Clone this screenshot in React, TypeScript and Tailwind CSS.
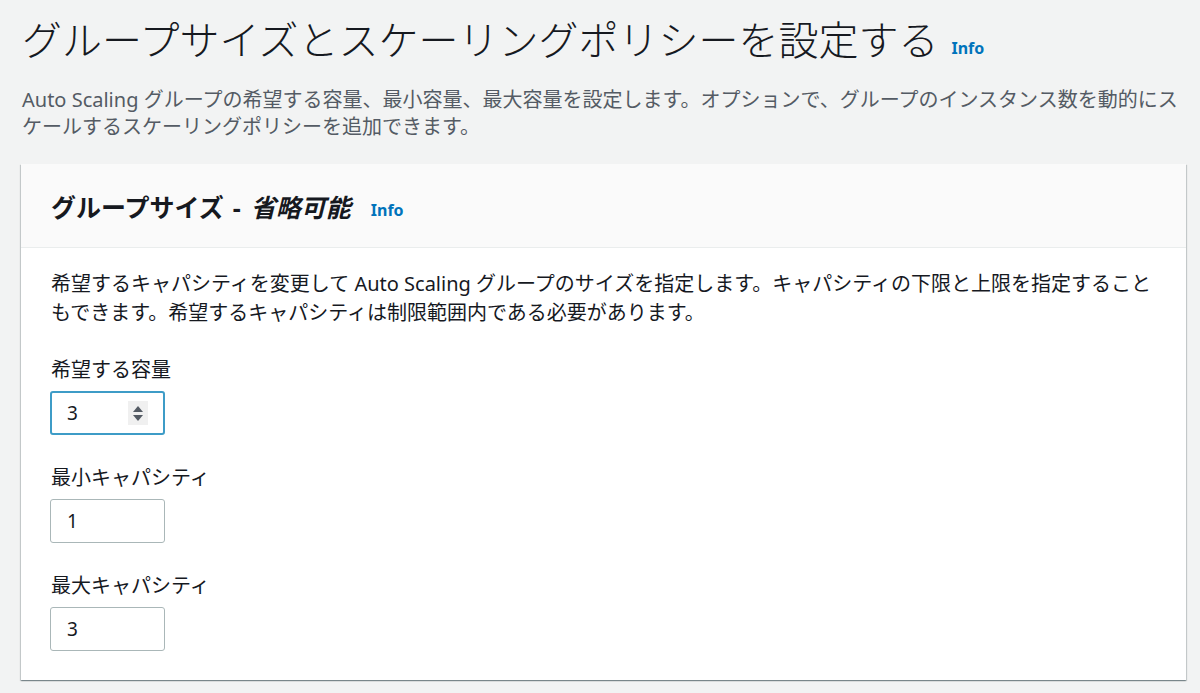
import React from "react";

const FONT = { fontFamily: '"Noto Sans", "Noto Sans CJK JP", sans-serif' };

function Spinner() {
  return (
    <div className="flex h-[24px] w-[20px] flex-col items-center justify-center gap-[3px] bg-[#f0f0f0]">
      <svg width="10" height="6" viewBox="0 0 10 6">
        <path d="M5 0 L10 6 L0 6 Z" fill="#545b64" />
      </svg>
      <svg width="10" height="6" viewBox="0 0 10 6">
        <path d="M0 0 L10 0 L5 6 Z" fill="#545b64" />
      </svg>
    </div>
  );
}

function Field({ label, value, focused }: { label: string; value: string; focused?: boolean }) {
  return (
    <div className="flex flex-col">
      <div className="text-[20px] leading-[26px] text-[#16191f]">{label}</div>
      <div
        className={
          focused
            ? "-ml-[1px] mt-[8px] flex h-[44px] w-[115px] items-center justify-between rounded-[3px] border-2 border-[#3e9cc7] bg-white pl-[15px] pr-[15px]"
            : "-ml-[1px] mt-[8px] flex h-[44px] w-[115px] items-center rounded-[3px] border border-[#aab7b8] bg-white pl-[16px]"
        }
      >
        <span className="text-[19px] text-[#16191f]">{value}</span>
        {focused && <Spinner />}
      </div>
    </div>
  );
}

export default function App() {
  return (
    <div className="min-h-[693px] w-[1200px] bg-[#f2f3f3]" style={FONT}>
      <div className="pl-[22px] pt-[16px]">
        <div className="flex h-[48px] items-center">
          <h1 className="text-[40px] font-light leading-[48px] text-[#16191f]">
            グループサイズとスケーリングポリシーを設定する
          </h1>
          <span className="ml-[13px] mt-[16px] text-[16px] font-bold text-[#0073bb]">Info</span>
        </div>
        <p className="mt-[22px] w-[1160px] text-[20px] leading-[27px] text-[#545b64]">
          Auto Scaling グループの希望する容量、最小容量、最大容量を設定します。オプションで、グループのインスタンス数を動的にスケールするスケーリングポリシーを追加できます。
        </p>
      </div>

      <div className="ml-[21px] mt-[24px] w-[1165px] bg-white shadow-[0_1px_1px_0_rgba(0,28,36,0.3),1px_1px_1px_0_rgba(0,28,36,0.15),-1px_1px_1px_0_rgba(0,28,36,0.15)]">
        <div className="flex h-[84px] items-center border-b border-[#eaeded] bg-[#fafafa] px-[30px] pt-[4px]">
          <h2 className="text-[25px] font-bold text-[#16191f]">
            グループサイズ<span className="ml-[9px] mr-[10px]">-</span><i>省略可能</i>
          </h2>
          <span className="ml-[20px] mt-[4px] text-[16px] font-bold text-[#0073bb]">Info</span>
        </div>
        <div className="px-[30px] pb-[29px] pt-[21px]">
          <p className="text-[20px] leading-[29px] text-[#16191f]">
            希望するキャパシティを変更して Auto Scaling グループのサイズを指定します。キャパシティの下限と上限を指定することもできます。希望するキャパシティは制限範囲内である必要があります。
          </p>
          <div className="mt-[30px] flex flex-col gap-[30px]">
            <Field label="希望する容量" value="3" focused />
            <Field label="最小キャパシティ" value="1" />
            <Field label="最大キャパシティ" value="3" />
          </div>
        </div>
      </div>
    </div>
  );
}
